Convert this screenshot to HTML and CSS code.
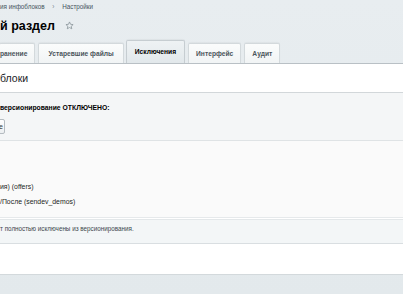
FILE: index.html
```html
<!DOCTYPE html>
<html lang="ru">

<head>
    <meta charset="UTF-8">
    <meta name="viewport" content="width=device-width, initial-scale=1.0">
    <title>Настройки</title>
    <link rel="stylesheet" href="styles.css">
</head>

<body>
    <div class="crumbs">
        <span>ия инфоблоков</span>
        <span class="crumbs-sep">&rsaquo;</span>
        <span>Настройки</span>
    </div>

    <div class="title">
        <h1>й раздел</h1>
        <svg class="star" width="9" height="9" viewBox="0 0 24 24">
            <path d="M12 2.5l2.9 6.3 6.8.7-5.1 4.6 1.5 6.7L12 17.3l-5.9 3.5 1.5-6.7-5.1-4.6 6.8-.7z" fill="none" stroke="#8c969c" stroke-width="2.2" stroke-linejoin="round"/>
        </svg>
    </div>

    <div class="tabs">
        <div class="tab tab-first">ранение</div>
        <div class="tab tab-wide">Устаревшие файлы</div>
        <div class="tab tab-active">Исключения</div>
        <div class="tab">Интерфейс</div>
        <div class="tab">Аудит</div>
    </div>

    <div class="panel">
        <div class="panel-head">блоки</div>

        <div class="opts">
            <div class="opts-label">версионирование ОТКЛЮЧЕНО:</div>
            <button class="btn">е</button>
        </div>

        <div class="list">
            <div class="list-item">ия) (offers)</div>
            <div class="list-item">/После (sendev_demos)</div>
        </div>

        <div class="note">т полностью исключены из версионирования.</div>

        <div class="panel-foot"></div>
    </div>
</body>

</html>
```

FILE: styles.css
```css
body {
    margin: 0;
    width: 403px;
    height: 294px;
    overflow: hidden;
    background: linear-gradient(#e8edf0, #e3e9ec);
    font-family: "Liberation Sans", Arial, sans-serif;
    color: #000;
}

.crumbs {
    height: 13px;
    line-height: 13px;
    font-size: 6.3px;
    color: #46545d;
    white-space: nowrap;
}

.crumbs-sep {
    margin: 0 6px;
    color: #7d878d;
}

.title {
    height: 26px;
    display: flex;
    align-items: center;
    gap: 10px;
}

.title h1 {
    margin: 0;
    font-size: 12.5px;
    font-weight: bold;
    color: #000;
}

.star {
    margin-top: -1px;
}

.tabs {
    height: 24px;
    display: flex;
    align-items: flex-end;
    gap: 3px;
    white-space: nowrap;
}

.tab {
    height: 19px;
    line-height: 19px;
    padding: 0 7px;
    font-size: 6.7px;
    font-weight: bold;
    color: #4b555b;
    background: linear-gradient(#fbfcfc, #f1f4f5);
    border: 1px solid #d3d9dc;
    border-bottom: none;
    border-radius: 2px 2px 0 0;
    box-shadow: 0 -1px 1px rgba(0, 0, 0, 0.04);
}

.tab-first {
    margin-left: -1px;
    padding-left: 0;
    padding-right: 7px;
}

.tab-wide {
    padding: 0 9px;
}

.tab-active {
    height: 22px;
    line-height: 22px;
    margin-left: -1px;
    padding: 0 8px;
    color: #000;
    background: linear-gradient(#eef2f4, #e2e8eb);
    border-color: #c6cdd1;
}

.panel {
    background: #fff;
    border-top: 1px solid #b9c0c5;
}

.panel-head {
    height: 28px;
    line-height: 28px;
    font-size: 10.5px;
    color: #1d2327;
}

.opts {
    height: 48px;
    background: #f4f6f7;
    border-top: 1px solid #d2d7da;
    box-sizing: border-box;
    padding-top: 10px;
}

.opts-label {
    font-size: 6.8px;
    font-weight: bold;
    line-height: 9px;
}

.btn {
    display: block;
    height: 15px;
    margin: 7px 0 0 -10px;
    padding: 0 1px 0 8px;
    font: 7px "Liberation Sans", Arial, sans-serif;
    color: #333;
    background: linear-gradient(#fff, #eceff1);
    border: 1px solid #b5bcc1;
    border-radius: 2px;
}

.list {
    height: 78px;
    box-sizing: border-box;
    padding-top: 38px;
    background: #fafafa;
    border-top: 1px solid #dfe3e5;
    border-bottom: 1px solid #e6e9eb;
}

.list-item {
    font-size: 6.9px;
    line-height: 15px;
    color: #1b1f22;
}

.note {
    height: 23px;
    line-height: 18px;
    margin-top: 1px;
    font-size: 6.3px;
    color: #3d464c;
    background: #f3f6f7;
    border-top: 1px solid #e3e7e9;
    border-bottom: 1px solid #d9dee1;
}

.panel-foot {
    height: 30px;
    border-bottom: 1px solid #d3d9dc;
}
```
